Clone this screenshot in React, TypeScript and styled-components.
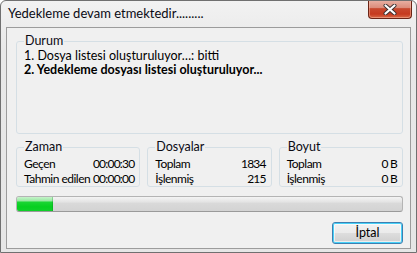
import React from "react";
import styled, { createGlobalStyle } from "styled-components";

const GlobalStyle = createGlobalStyle`
  html, body {
    margin: 0;
    padding: 0;
    background: #ffffff;
  }
  body {
    font-family: Lato, "Noto Sans", sans-serif;
    font-size: 12px;
    color: #000;
  }
`;

interface StatRow {
  label: string;
  value: string;
}

interface StatGroup {
  title: string;
  rows: StatRow[];
}

const groups: StatGroup[] = [
  {
    title: "Zaman",
    rows: [
      { label: "Geçen", value: "00:00:30" },
      { label: "Tahmin edilen", value: "00:00:00" },
    ],
  },
  {
    title: "Dosyalar",
    rows: [
      { label: "Toplam", value: "1834" },
      { label: "İşlenmiş", value: "215" },
    ],
  },
  {
    title: "Boyut",
    rows: [
      { label: "Toplam", value: "0 B" },
      { label: "İşlenmiş", value: "0 B" },
    ],
  },
];

const progress = 9.4;

const App = () => {
  return (
    <>
      <GlobalStyle />
      <Window>
        <TitleBar>
          <Title>Yedekleme devam etmektedir.........</Title>
          <CloseButton aria-label="Kapat">
            <svg width="14" height="11" viewBox="0 0 14 11">
              <path
                d="M2.5 1.5 L11.5 9.5 M11.5 1.5 L2.5 9.5"
                stroke="#3b3030"
                strokeWidth="4"
                strokeLinecap="round"
              />
              <path
                d="M2.5 1.5 L11.5 9.5 M11.5 1.5 L2.5 9.5"
                stroke="#ffffff"
                strokeWidth="2.2"
                strokeLinecap="round"
              />
            </svg>
          </CloseButton>
        </TitleBar>

        <Client>
          <StatusBox>
            <Legend>Durum</Legend>
            <StatusLine>1. Dosya listesi oluşturuluyor…: bitti</StatusLine>
            <StatusLine $bold>2. Yedekleme dosyası listesi oluşturuluyor...</StatusLine>
          </StatusBox>

          <StatsGrid>
            {groups.map((g) => (
              <StatBox key={g.title}>
                <Legend>{g.title}</Legend>
                {g.rows.map((r) => (
                  <Row key={r.label}>
                    <Label>{r.label}</Label>
                    <Value>{r.value}</Value>
                  </Row>
                ))}
              </StatBox>
            ))}
          </StatsGrid>

          <ProgressTrack>
            <ProgressFill style={{ width: `${progress}%` }} />
          </ProgressTrack>

          <ButtonRow>
            <CancelButton>İptal</CancelButton>
          </ButtonRow>
        </Client>
      </Window>
    </>
  );
};

export default App;

const Window = styled.div`
  width: 417px;
  height: 253px;
  box-sizing: border-box;
  border: 1px solid #707070;
  border-radius: 6px 6px 0 0;
  background: linear-gradient(to bottom, #f2f2f2 0%, #e8e8e8 20%, #e6e6e6 100%);
  display: flex;
  flex-direction: column;
  overflow: hidden;
`;

const TitleBar = styled.div`
  height: 26px;
  display: flex;
  justify-content: space-between;
  align-items: flex-start;
  padding-left: 7px;
`;

const Title = styled.div`
  padding-top: 4px;
  font-size: 13px;
  line-height: 16px;
  color: #0a0a14;
  white-space: nowrap;
`;

const CloseButton = styled.div`
  width: 44px;
  height: 19px;
  margin-top: -1px;
  margin-right: 4px;
  box-sizing: border-box;
  border: 1px solid #6b2416;
  border-top: none;
  border-radius: 0 0 4px 4px;
  background: linear-gradient(
    to bottom,
    #eab3a6 0%,
    #dc8d7c 42%,
    #c8492f 48%,
    #c63a1f 78%,
    #d96a48 100%
  );
  box-shadow: inset 0 0 0 1px rgba(255, 200, 180, 0.45);
  display: flex;
  align-items: center;
  justify-content: center;
`;

const Client = styled.div`
  margin: 0 5px 3px 5px;
  height: 222px;
  box-sizing: border-box;
  border: 1px solid #9c9c9c;
  background: #f0f0f0;
  padding: 7px 7px 4px 9px;
  display: flex;
  flex-direction: column;
`;

const GroupBox = styled.fieldset`
  margin: 0;
  min-width: 0;
  box-sizing: border-box;
  border: 1px solid #d5dfe5;
  border-radius: 3px;
  padding: 3px 5px 0 7px;
`;

const Legend = styled.legend`
  padding: 0 1px;
  font-size: 12.5px;
  line-height: 12px;
  color: #0a0a14;
`;

const StatusBox = styled(GroupBox)`
  height: 99px;
  padding-top: 2px;
`;

const StatusLine = styled.div<{ $bold?: boolean }>`
  font-size: 12.5px;
  line-height: 14px;
  font-weight: ${(p) => (p.$bold ? 700 : 400)};
  white-space: nowrap;
`;

const StatsGrid = styled.div`
  margin-top: 7px;
  display: grid;
  grid-template-columns: repeat(3, 1fr);
  column-gap: 7px;
`;

const StatBox = styled(GroupBox)`
  height: 46px;
`;

const Row = styled.div`
  display: flex;
  justify-content: space-between;
  font-size: 12px;
  line-height: 15px;
  white-space: nowrap;
`;

const Label = styled.span`
  letter-spacing: -0.5px;
`;

const Value = styled.span`
  letter-spacing: -0.8px;
`;

const ProgressTrack = styled.div`
  margin-top: 9px;
  height: 16px;
  box-sizing: border-box;
  border: 1px solid #b4b4b4;
  border-bottom-color: #9a9a9a;
  border-radius: 3px;
  background: linear-gradient(
    to bottom,
    #f4f4f4 0%,
    #e4e4e4 35%,
    #d9d9d9 45%,
    #d3d3d3 100%
  );
  overflow: hidden;
`;

const ProgressFill = styled.div`
  height: 100%;
  background: linear-gradient(
    to bottom,
    #c6f3ca 0%,
    #98e9a2 28%,
    #1bd534 36%,
    #06cf20 70%,
    #10d02a 100%
  );
  box-shadow: inset -1px 0 0 rgba(0, 120, 20, 0.25);
`;

const ButtonRow = styled.div`
  margin-top: 10px;
  display: flex;
  justify-content: flex-end;
`;

const CancelButton = styled.button`
  width: 71px;
  height: 22px;
  box-sizing: border-box;
  padding: 0;
  border: 1px solid #3c7fb1;
  border-radius: 3px;
  background: linear-gradient(
    to bottom,
    #f2f2f2 0%,
    #ebebeb 48%,
    #dddddd 52%,
    #cfcfcf 100%
  );
  box-shadow: inset 0 0 0 1px #48d1f8, inset 0 0 0 2px rgba(255, 255, 255, 0.6);
  font-family: Lato, "Noto Sans", sans-serif;
  font-size: 12.5px;
  line-height: 18px;
  color: #000;
`;
